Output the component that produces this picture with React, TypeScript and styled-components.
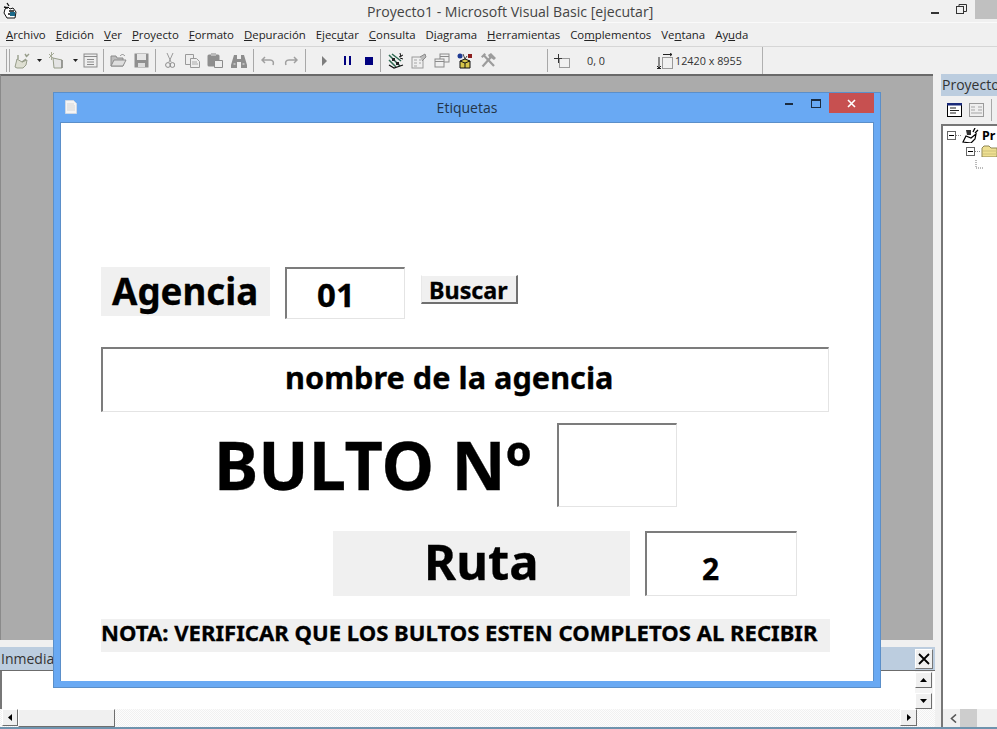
import React from 'react'
import styled, { createGlobalStyle } from 'styled-components'

const GlobalStyle = createGlobalStyle`
  html, body { margin: 0; padding: 0; background: #f0f0f0; overflow: hidden; }
  * { box-sizing: border-box; }
`

const Ide = styled.div`
  width: 997px;
  height: 729px;
  position: relative;
  display: flex;
  flex-direction: column;
  overflow: hidden;
  background: #f0f0f0;
  font-family: 'Open Sans', 'Noto Sans', sans-serif;
  color: #333;
`

const TitleBar = styled.div`
  height: 23px;
  flex: none;
  display: flex;
  align-items: center;
  justify-content: space-between;
  padding: 0 0 0 2px;
  background: #f0f0f0;
  border-bottom: 1px solid #fafafa;
`

const TitleText = styled.div`
  position: absolute;
  left: 367px;
  top: 2px;
  font-size: 14.1px;
  line-height: 20px;
  color: #444;
  white-space: nowrap;
`

const Caption = styled.div`
  display: flex;
  align-items: flex-start;
  height: 22px;
`

const CaptionGlyph = styled.div<{ $w: number }>`
  width: ${p => p.$w}px;
  height: 19px;
  display: flex;
  align-items: center;
  justify-content: center;
`

const CloseStub = styled.div`
  width: 22px;
  height: 19px;
  background: #c0c0c0;
`

const MenuBar = styled.div`
  height: 24px;
  flex: none;
  display: flex;
  align-items: center;
  gap: 10px;
  padding: 0 0 1px 6px;
  font-size: 11.4px;
  color: #222;
  background: #f0f0f0;
  border-bottom: 1px solid #d6d6d6;
`

const MenuItem = styled.span`
  white-space: nowrap;
  u { text-underline-offset: 1px; }
`

const ToolRow = styled.div`
  height: 27px;
  width: 763px;
  flex: none;
  display: flex;
  align-items: center;
  padding-left: 6px;
  border-right: 1px solid #b0b0b0;
  background: #f0f0f0;
`

const Grip = styled.div`
  width: 4px;
  height: 23px;
  margin-right: 3px;
  border-left: 1px solid #a8a8a8;
  border-right: 1px solid #a8a8a8;
`

const Sep = styled.div<{ $gap?: number }>`
  width: 1px;
  height: 23px;
  background: #a8a8a8;
  flex: none;
  margin: 0 ${p => p.$gap ?? 3}px;
`

const Slot = styled.div<{ $w?: number }>`
  width: ${p => p.$w ?? 23}px;
  height: 20px;
  flex: none;
  display: flex;
  align-items: center;
  justify-content: center;
`

const Coord = styled.span<{ $w: number }>`
  width: ${p => p.$w}px;
  flex: none;
  font-size: 10.8px;
  color: #333;
  white-space: nowrap;
`

const Body = styled.div`
  flex: 1;
  display: flex;
  min-height: 0;
`

const LeftColumn = styled.div`
  width: 941px;
  flex: none;
  display: flex;
  flex-direction: column;
`

const Workspace = styled.div`
  height: 566px;
  width: 933px;
  flex: none;
  background: #ababab;
  border-top: 2px solid #696969;
  border-left: 1px solid #8a8a8a;
`

const Immediate = styled.div`
  flex: 1;
  display: flex;
  flex-direction: column;
  padding: 7px 0 2px;
  width: 935px;
`

const DockHead = styled.div`
  height: 24px;
  flex: none;
  display: flex;
  align-items: center;
  justify-content: space-between;
  padding-right: 2px;
  background: #bccddf;
  border-bottom: 1px solid #6c6c6c;
  font-size: 14px;
  color: #333;
  span { padding-left: 1px; }
`

const DockClose = styled.div`
  width: 18px;
  height: 20px;
  display: flex;
  align-items: center;
  justify-content: center;
  background: #f0f0f0;
  border: 1px solid;
  border-color: #fff #777 #777 #fff;
`

const DockText = styled.div`
  flex: 1;
  display: flex;
  justify-content: flex-end;
  background: #fff;
  border-left: 2px solid #777;
  padding-right: 2px;
`

const VScroll = styled.div`
  width: 18px;
  display: flex;
  flex-direction: column;
  justify-content: space-between;
  background: #f4f4f4;
  padding-top: 1px;
`

const HScroll = styled.div`
  height: 18px;
  flex: none;
  display: flex;
  padding-left: 2px;
  padding-right: 18px;
  background: repeating-conic-gradient(#f1f1f1 0 25%, #fdfdfd 0 50%) 0 0 / 2px 2px;
`

const Spacer = styled.div`
  flex: 1;
`

const ArrowBtn = styled.div<{ $w: number; $h: number }>`
  width: ${p => p.$w}px;
  height: ${p => p.$h}px;
  flex: none;
  display: flex;
  align-items: center;
  justify-content: center;
  background: #f0f0f0;
  border: 1px solid;
  border-color: #fff #6e6e6e #6e6e6e #fff;
`

const Thumb = styled.div`
  width: 97px;
  flex: none;
  background: #f0f0f0;
  border: 1px solid;
  border-color: #fff #6e6e6e #6e6e6e #fff;
`

const BottomEdge = styled.div`
  height: 2px;
  flex: none;
  background: #6f93ad;
  position: absolute;
  left: 0;
  right: 0;
  bottom: 0;
`

const ProjectPanel = styled.div`
  flex: 1;
  display: flex;
  flex-direction: column;
  min-width: 0;
  overflow: hidden;
`

const ProjectHead = styled.div`
  height: 22px;
  flex: none;
  background: #bccddf;
  font-size: 14px;
  line-height: 21px;
  color: #333;
  padding-left: 1px;
  white-space: nowrap;
`

const ProjectTools = styled.div`
  height: 28px;
  flex: none;
  display: flex;
  align-items: center;
  gap: 7px;
  padding-left: 6px;
`

const ToolDivider = styled.div`
  width: 1px;
  height: 22px;
  margin-left: 0;
  background: #a8a8a8;
`

const TreeBox = styled.div`
  flex: 1;
  background: #fff;
  border-top: 2px solid #777;
  border-left: 2px solid #777;
  padding: 1px 0 0 4px;
  display: flex;
  flex-direction: column;
`

const TreeRow = styled.div<{ $indent: number; $h?: number }>`
  height: ${p => p.$h ?? 16}px;
  display: flex;
  align-items: center;
  padding-left: ${p => p.$indent}px;
  font-size: 12.5px;
  font-weight: 700;
  color: #000;
  font-family: 'Noto Sans', sans-serif;
  white-space: nowrap;
  span { margin-left: 3px; }
`

const ProjectScroll = styled.div`
  height: 18px;
  flex: none;
  display: flex;
  align-items: center;
  padding-left: 7px;
  gap: 3px;
  background: #f0f0f0;
  border-left: 2px solid #777;
  margin-bottom: 2px;
`

const ProjectThumb = styled.div`
  width: 17px;
  height: 18px;
  background: #cdcdcd;
`

/* the running form floats over the MDI workspace */
const FormWindow = styled.div`
  position: absolute;
  left: 53px;
  top: 92px;
  width: 828px;
  height: 596px;
  display: flex;
  flex-direction: column;
  background: #69a9f3;
  border: 1px solid #5b8fc9;
  padding: 0 6px 6px;
`

const FormTitle = styled.div`
  height: 29px;
  flex: none;
  position: relative;
  display: flex;
  align-items: flex-start;
  justify-content: center;
  padding-top: 5px;
  font-size: 14px;
  line-height: 19px;
  color: #24364a;
`

const FormIcon = styled.div`
  position: absolute;
  left: 5px;
  top: 6px;
`

const FormButtons = styled.div`
  position: absolute;
  right: 0;
  top: 0;
  display: flex;
  align-items: flex-start;
`

const FormBtn = styled.div<{ $w: number }>`
  width: ${p => p.$w}px;
  height: 20px;
  display: flex;
  align-items: center;
  justify-content: center;
`

const FormClose = styled(FormBtn)`
  background: #c75050;
`

const Client = styled.div`
  flex: 1;
  background: #fff;
  border: 1px solid #5b8fc9;
  border-bottom: 0;
  padding: 144px 0 0 40px;
  display: flex;
  flex-direction: column;
  font-family: 'Noto Sans', 'Open Sans', sans-serif;
  font-weight: 700;
  color: #000;
  -webkit-text-stroke: 0.3px #000;
`

const Row = styled.div<{ $top: number; $left?: number; $gap?: number; $h: number }>`
  display: flex;
  align-items: flex-start;
  height: ${p => p.$h}px;
  margin-top: ${p => p.$top}px;
  margin-left: ${p => p.$left ?? 0}px;
  gap: ${p => p.$gap ?? 0}px;
`

const Label = styled.div<{ $w: number; $h: number; $size: number; $pad?: number; $lh?: number }>`
  width: ${p => p.$w}px;
  height: ${p => p.$h}px;
  flex: none;
  background: #f0f0f0;
  font-size: ${p => p.$size}px;
  line-height: ${p => p.$lh ?? p.$h}px;
  padding-left: ${p => p.$pad ?? 0}px;
  white-space: nowrap;
`

const Field = styled.div<{ $w: number; $h: number; $size?: number; $pad?: number; $lh?: number }>`
  width: ${p => p.$w}px;
  height: ${p => p.$h}px;
  flex: none;
  background: #fff;
  border: 1px solid #e4e4e4;
  border-top: 2px solid #7c7c7c;
  border-left: 2px solid #7c7c7c;
  font-size: ${p => p.$size ?? 30}px;
  line-height: ${p => p.$lh ?? p.$h}px;
  padding-left: ${p => p.$pad ?? 0}px;
  white-space: nowrap;
`

const SearchBtn = styled.div`
  width: 97px;
  height: 29px;
  margin: 8px 0 0 1px;
  flex: none;
  background: #f0f0f0;
  border: 1px solid;
  border-color: #fff #707070 #707070 #e8e8e8;
  border-width: 1px 2px 2px 1px;
  font-size: 23.3px;
  line-height: 29px;
  padding-left: 7px;
`

const BigTitle = styled.div`
  width: 343px;
  flex: none;
  margin-left: 113px;
  margin-top: -3px;
  font-size: 66.6px;
  line-height: 90px;
  white-space: nowrap;
`

const Note = styled.div`
  width: 729px;
  height: 33px;
  background: #f0f0f0;
  font-size: 22.1px;
  line-height: 27px;
  white-space: nowrap;
`

const Down = () => (
  <svg width="5" height="3" viewBox="0 0 5 3"><path d="M0 0h5L2.5 3z" fill="#222" /></svg>
)

const Ico = ({ children, w = 16, h = 16 }: { children: React.ReactNode; w?: number; h?: number }) => (
  <svg width={w} height={h} viewBox={`0 0 ${w} ${h}`}>{children}</svg>
)

const TreeToggle = () => (
  <Ico w={9} h={9}>
    <rect x="0.5" y="0.5" width="8" height="8" fill="#fff" stroke="#666" />
    <path d="M2 4.5h5" stroke="#000" />
  </Ico>
)

const TreeDots = () => (
  <Ico w={6} h={9}><path d="M0 4.5h6" stroke="#888" strokeDasharray="1 1" /></Ico>
)

const MENU: React.ReactNode[] = [
  <><u>A</u>rchivo</>, <><u>E</u>dición</>, <><u>V</u>er</>, <><u>P</u>royecto</>, <><u>F</u>ormato</>,
  <><u>D</u>epuración</>, <>Ejec<u>u</u>tar</>, <><u>C</u>onsulta</>, <>D<u>i</u>agrama</>, <><u>H</u>erramientas</>,
  <>Co<u>m</u>plementos</>, <>Ve<u>n</u>tana</>, <>Ay<u>u</u>da</>,
]

const App: React.FC = () => (
  <Ide>
    <GlobalStyle />
    <TitleBar>
      <Ico w={16} h={18}>
        <path d="M3 7l3-2 2 2 3-1 3 4-1 6H5L2 11z" fill="#fff" stroke="#111" />
        <path d="M5 1l2 3M2 5l4 1M7 9h5M6 12h5" stroke="#111" strokeWidth="1.3" />
        <rect x="8" y="10" width="5" height="4" fill="#1a6a8a" />
      </Ico>
      <TitleText>Proyecto1 - Microsoft Visual Basic [ejecutar]</TitleText>
      <Caption>
        <CaptionGlyph $w={24}>
          <svg width="8" height="8" viewBox="0 0 8 8"><rect width="8" height="2" y="6" fill="#333" /></svg>
        </CaptionGlyph>
        <CaptionGlyph $w={28}>
          <svg width="11" height="11" viewBox="0 0 11 11" fill="none" stroke="#333">
            <path d="M3 2.5V.5h7.5v7H8" /><rect x=".5" y="2.5" width="7" height="7" />
          </svg>
        </CaptionGlyph>
        <CloseStub />
      </Caption>
    </TitleBar>

    <MenuBar>
      {MENU.map((m, i) => <MenuItem key={i}>{m}</MenuItem>)}
    </MenuBar>

    <ToolRow>
      <Grip />
      <Slot $w={20}>
        <Ico w={18} h={17}>
          <path d="M1 15l2-8 5 3 5-2-1 5-3 3H3z" fill="#dedfd2" stroke="#979d8a" />
          <path d="M4 7V3M11 2l2 3M15 2l-3 3M8 10l4-3" stroke="#979d8a" strokeWidth="1.4" />
        </Ico>
      </Slot>
      <Slot $w={12}><Down /></Slot>
      <Slot $w={24}>
        <Ico w={18} h={17}>
          <path d="M1 2l4 4M6 1L1 6M3.5 0v8" stroke="#a6ab98" />
          <path d="M5 6l9 2v8H6z" fill="#e4e4e4" stroke="#979d8a" />
          <path d="M14 8v8" stroke="#707070" />
        </Ico>
      </Slot>
      <Slot $w={12}><Down /></Slot>
      <Slot $w={19}>
        <Ico w={15} h={15}>
          <rect x="1" y="1" width="13" height="13" fill="#eee" stroke="#8b8b8b" />
          <path d="M1 3.5h13M4 6.5h7M4 9h7M4 11.5h7" stroke="#8b8b8b" />
        </Ico>
      </Slot>
      <Sep $gap={3} />
      <Slot>
        <Ico w={17} h={15}>
          <path d="M1 3h5l1 2h6v8H1z" fill="#bdbdbd" stroke="#8b8b8b" />
          <path d="M1 13l3-6h12l-3 6z" fill="#dedede" stroke="#8b8b8b" />
          <path d="M10 3c2-2 3-2 5 0" fill="none" stroke="#8b8b8b" />
        </Ico>
      </Slot>
      <Slot $w={22}>
        <Ico w={15} h={15}>
          <rect x="0.5" y="0.5" width="14" height="14" fill="#8f8f8f" />
          <rect x="3" y="1" width="9" height="6" fill="#e6e6e6" />
          <rect x="4" y="10" width="7" height="4" fill="#dcdcdc" />
        </Ico>
      </Slot>
      <Sep $gap={3} />
      <Slot $w={22}>
        <Ico w={10} h={16}>
          <path d="M2 0l4 9M8 0L4 9" stroke="#9a9a9a" />
          <circle cx="3" cy="12" r="2.4" fill="none" stroke="#8b8b8b" />
          <circle cx="7.4" cy="12" r="2.4" fill="none" stroke="#8b8b8b" />
        </Ico>
      </Slot>
      <Slot $w={22}>
        <Ico w={15} h={14}>
          <path d="M.5.5h8v10h-8z" fill="#eee" stroke="#9a9a9a" />
          <path d="M5.5 4.5h6l3 3v6h-9z" fill="#eee" stroke="#9a9a9a" />
          <path d="M7 8h5M7 10h6" stroke="#aaa" />
        </Ico>
      </Slot>
      <Slot $w={24}>
        <Ico w={16} h={15}>
          <rect x="0.5" y="1.5" width="12" height="12" rx="1.5" fill="#8e8e8e" />
          <rect x="4" y="0" width="5" height="3" fill="#bbb" />
          <path d="M7.5 7.5h8v7h-8z" fill="#eee" stroke="#8b8b8b" />
        </Ico>
      </Slot>
      <Slot $w={23}>
        <Ico w={16} h={14}>
          <path d="M3 1h3v4h4V1h3l3 10v3H10V8H6v6H0v-3z" fill="#8e8e8e" />
          <path d="M2.5 10h2M11.5 10h2" stroke="#eee" />
        </Ico>
      </Slot>
      <Sep $gap={3} />
      <Slot $w={22}>
        <Ico w={14} h={10}>
          <path d="M4 1L1 4l3 3M1.5 4H9c3 0 4 2 3 5" fill="none" stroke="#a0a0a0" strokeWidth="1.5" />
        </Ico>
      </Slot>
      <Slot $w={23}>
        <Ico w={14} h={10}>
          <path d="M10 1l3 3-3 3M12.5 4H5C2 4 1 6 2 9" fill="none" stroke="#a0a0a0" strokeWidth="1.5" />
        </Ico>
      </Slot>
      <Sep $gap={3} />
      <Slot $w={13} />
      <Slot $w={5}>
        <Ico w={5} h={10}><path d="M0 0l5 5-5 5z" fill="#7d7d7d" /></Ico>
      </Slot>
      <Slot $w={9} />
      <Slot $w={22}>
        <Ico w={7} h={9}><path d="M0 0h2v9H0zM5 0h2v9H5z" fill="#00007f" /></Ico>
      </Slot>
      <Slot $w={22}>
        <Ico w={8} h={8}><rect width="8" height="8" fill="#00007f" /></Ico>
      </Slot>
      <Sep $gap={0} />
      <Slot $w={3} />
      <Slot>
        <Ico w={16} h={16}>
          <path d="M1 2l11 11M1 7l7 7M4 1l9 7" stroke="#2e6a52" strokeWidth="1.5" />
          <path d="M4 5h3v3H4zM8 9h3v3H8z" fill="#222" />
          <path d="M12 0l1 4M15 2l-4 2M15 6l-3-1" stroke="#111" />
          <path d="M1 12l5 3 9-3" fill="none" stroke="#111" strokeWidth="1.3" />
        </Ico>
      </Slot>
      <Slot>
        <Ico w={16} h={16}>
          <rect x="1" y="4" width="11" height="11" fill="#efefef" stroke="#9a9a9a" />
          <path d="M3 7h3M3 10h3M3 13h3M8 7h2M8 10h2" stroke="#a5a5a5" />
          <path d="M9 4l5-3 1 3-4 4" fill="#bbb" stroke="#8b8b8b" />
        </Ico>
      </Slot>
      <Slot>
        <Ico w={16} h={15}>
          <rect x="6" y="1" width="9" height="8" fill="#efefef" stroke="#8b8b8b" />
          <rect x="1" y="6" width="9" height="8" fill="#efefef" stroke="#8b8b8b" />
          <path d="M6 3.5h9M1 8.5h9" stroke="#8b8b8b" />
        </Ico>
      </Slot>
      <Slot>
        <Ico w={16} h={16}>
          <circle cx="3" cy="3" r="2.5" fill="#1f3a93" />
          <rect x="11" y="1" width="4" height="4" fill="#8c1f1f" />
          <path d="M6 1l2 5M10 3L8 6" stroke="#444" />
          <path d="M3 8l5-2 5 2v7H3z" fill="#d6c64a" stroke="#111" />
          <path d="M8 10v5M3 8l5 2 5-2" fill="none" stroke="#111" />
        </Ico>
      </Slot>
      <Slot>
        {/* crossed hammer and wrench, greyed out */}
        <Ico w={16} h={15}>
          <path d="M2.5 13.5L11 4" stroke="#9c9c9c" strokeWidth="2.2" />
          <path d="M3.5 2L14 13" stroke="#9c9c9c" strokeWidth="2.2" />
          <path d="M1 3.5L4.5 0 6 1.5 2.5 5z" fill="#9c9c9c" />
          <path d="M8 2l3-2 5 5-2 2-3-2-2-1z" fill="#9c9c9c" />
        </Ico>
      </Slot>
      <Slot $w={48} />
      <Sep $gap={0} />
      <Slot $w={6} />
      <Slot $w={16}>
        <Ico w={16} h={15}>
          <path d="M0 5.5h8M4.5 1v9" stroke="#333" />
          <path d="M5.5 5.5h10v9h-10z" fill="none" stroke="#444" strokeDasharray="1 1" />
        </Ico>
      </Slot>
      <Slot $w={17} />
      <Coord $w={70}>0, 0</Coord>
      <Slot $w={16}>
        <Ico w={16} h={16}>
          <path d="M5.5 4.5h10v11h-10z" fill="none" stroke="#444" strokeDasharray="1 1" />
          <path d="M6 1.5h9M13 0l2 1.5L13 3M2 4v11M0 13l2 2 2-2M0 15.5h4" fill="none" stroke="#222" />
        </Ico>
      </Slot>
      <Slot $w={2} />
      <Coord $w={70}>12420 x 8955</Coord>
    </ToolRow>

    <Body>
      <LeftColumn>
        <Workspace />
        <Immediate>
          <DockHead>
            <span>Inmediato</span>
            <DockClose>
              <svg width="12" height="12" viewBox="0 0 12 12"><path d="M1 1l10 10M11 1L1 11" stroke="#000" strokeWidth="1.8" /></svg>
            </DockClose>
          </DockHead>
          <DockText>
            <VScroll>
              <ArrowBtn $w={17} $h={16}>
                <svg width="7" height="4"><path d="M0 4h7L3.5 0z" fill="#000" /></svg>
              </ArrowBtn>
              <ArrowBtn $w={17} $h={16}>
                <svg width="7" height="4"><path d="M0 0h7L3.5 4z" fill="#000" /></svg>
              </ArrowBtn>
            </VScroll>
          </DockText>
          <HScroll>
            <ArrowBtn $w={16} $h={17}>
              <svg width="4" height="7"><path d="M4 0v7L0 3.5z" fill="#000" /></svg>
            </ArrowBtn>
            <Thumb />
            <Spacer />
            <ArrowBtn $w={17} $h={17}>
              <svg width="4" height="7"><path d="M0 0v7l4-3.5z" fill="#000" /></svg>
            </ArrowBtn>
          </HScroll>
        </Immediate>
      </LeftColumn>

      <ProjectPanel>
        <ProjectHead>Proyecto</ProjectHead>
        <ProjectTools>
          <Ico w={15} h={14}>
            <rect x="0.5" y="0.5" width="14" height="13" fill="#fff" stroke="#000" />
            <rect x="0" y="0" width="15" height="2.5" fill="#1a2a7a" />
            <path d="M3 5h6M3 7.5h9M3 10h6" stroke="#222" />
          </Ico>
          <Ico w={15} h={14}>
            <rect x="0.5" y="0.5" width="14" height="13" fill="#eee" stroke="#9a9a9a" />
            <path d="M2 4h4M9 4h4M2 7h4M9 7h4M2 10h11" stroke="#a5a5a5" />
          </Ico>
          <ToolDivider />
        </ProjectTools>
        <TreeBox>
          <TreeRow $indent={0}>
            <TreeToggle />
            <TreeDots />
            <Ico w={17} h={15}>
              <path d="M1 14l3-6 5 2 5-4-1 5-4 4z" fill="#fff" stroke="#000" strokeWidth="1.2" />
              <path d="M4 2h5v5H5z" fill="#333" />
              <path d="M11 4l2-4M13 5l3-3" fill="none" stroke="#000" strokeWidth="1.3" />
            </Ico>
            <span>Pr</span>
          </TreeRow>
          <TreeRow $indent={19}>
            <TreeToggle />
            <TreeDots />
            <Ico w={16} h={12}>
              <path d="M1 3l2-2h5l2 2h6v9H1z" fill="#efe092" stroke="#8f8654" />
              <path d="M2 6h14M2 9h14" stroke="#cfc27c" />
            </Ico>
          </TreeRow>
          <TreeRow $indent={28} $h={14}>
            <Ico w={9} h={12}><path d="M1 0v8h7" fill="none" stroke="#777" strokeDasharray="1 1" /></Ico>
          </TreeRow>
          <Spacer />
        </TreeBox>
        <ProjectScroll>
          <svg width="7" height="9" viewBox="0 0 7 9"><path d="M6 0.5L1.5 4.5 6 8.5" fill="none" stroke="#555" strokeWidth="1.6" /></svg>
          <ProjectThumb />
        </ProjectScroll>
      </ProjectPanel>
    </Body>

    <FormWindow>
      <FormTitle>
        <FormIcon>
          <svg width="12" height="14" viewBox="0 0 12 14">
            <path d="M.5.5h8l3 3v10H.5z" fill="#f4f4f4" stroke="#cfd8e4" />
            <path d="M2 4h7M2 6h8M2 8h8M2 10h8" stroke="#d5d5d5" />
          </svg>
        </FormIcon>
        Etiquetas
        <FormButtons>
          <FormBtn $w={28}>
            <svg width="8" height="3"><rect width="8" height="2" y="1" fill="#1b2c40" /></svg>
          </FormBtn>
          <FormBtn $w={26}>
            <svg width="10" height="9" viewBox="0 0 10 9" fill="none"><rect x=".5" y="1" width="9" height="7.5" stroke="#1b2c40" /><path d="M0 1h10" stroke="#1b2c40" strokeWidth="2" /></svg>
          </FormBtn>
          <FormClose $w={45}>
            <svg width="9" height="9" viewBox="0 0 9 9"><path d="M1 1l7 7M8 1L1 8" stroke="#fff" strokeWidth="1.6" /></svg>
          </FormClose>
        </FormButtons>
      </FormTitle>
      <Client>
        <Row $top={0} $h={52} $gap={15}>
          <Label $w={169} $h={49} $size={36.7} $pad={11} $lh={48}>Agencia</Label>
          <Field $w={120} $h={52} $size={33} $pad={30}>01</Field>
          <SearchBtn>Buscar</SearchBtn>
        </Row>
        <Row $top={28} $h={65}>
          <Field $w={728} $h={65} $size={30.7} $pad={182} $lh={57}>nombre de la agencia</Field>
        </Row>
        <Row $top={11} $h={84}>
          <BigTitle>BULTO Nº</BigTitle>
          <Field $w={120} $h={84} />
        </Row>
        <Row $top={24} $left={232} $h={65} $gap={15}>
          <Label $w={297} $h={65} $size={49} $pad={91} $lh={60}>Ruta</Label>
          <Field $w={152} $h={65} $size={30} $pad={55} $lh={71}>2</Field>
        </Row>
        <Row $top={23} $h={33}>
          <Note>NOTA: VERIFICAR QUE LOS BULTOS ESTEN COMPLETOS AL RECIBIR</Note>
        </Row>
      </Client>
    </FormWindow>
    <BottomEdge />
  </Ide>
)

export default App
